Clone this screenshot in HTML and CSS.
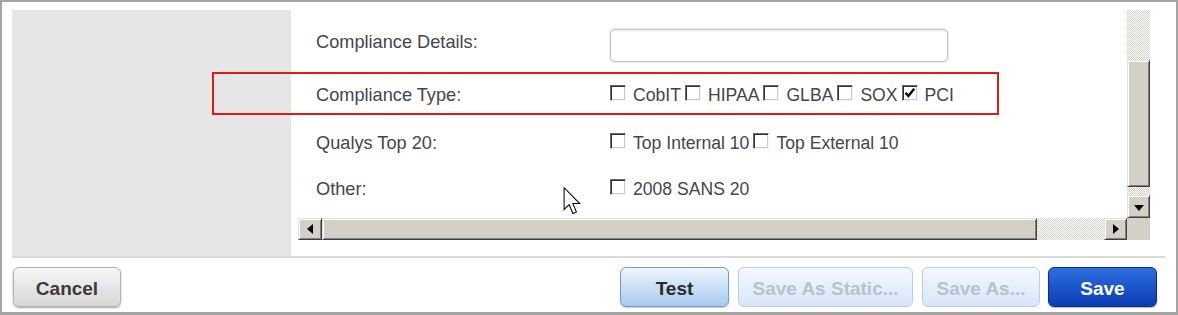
FILE: index.html
```html
<!DOCTYPE html>
<html>
<head>
<meta charset="utf-8">
<link rel="stylesheet" href="styles.css">
</head>
<body>
<div class="frame">
  <div class="top">
    <div class="side"></div>
    <div class="scroller">
      <div class="content">
        <div class="row row-details">
          <div class="label label-top">Compliance Details:</div>
          <div class="value"><div class="input"></div></div>
        </div>
        <div class="row row-type">
          <div class="label">Compliance Type:</div>
          <div class="value">
            <span class="opt"><span class="cb"></span>CobIT</span>
            <span class="opt"><span class="cb"></span>HIPAA</span>
            <span class="opt"><span class="cb"></span>GLBA</span>
            <span class="opt"><span class="cb"></span>SOX</span>
            <span class="opt"><span class="cb checked"><svg width="14" height="14" viewBox="0 0 14 14"><path d="M2.5 6.8 L5.4 10 L11.2 2.8" fill="none" stroke="#000" stroke-width="2.4"/></svg></span>PCI</span>
          </div>
        </div>
        <div class="row row-top20">
          <div class="label">Qualys Top 20:</div>
          <div class="value">
            <span class="opt"><span class="cb"></span>Top Internal 10</span>
            <span class="opt"><span class="cb"></span>Top External 10</span>
          </div>
        </div>
        <div class="row row-other">
          <div class="label">Other:</div>
          <div class="value">
            <span class="opt"><span class="cb"></span>2008 SANS 20</span>
          </div>
        </div>
      </div>
      <div class="vbar">
        <div class="track track-top"></div>
        <div class="thumb thumb-v"></div>
        <div class="track track-mid"></div>
        <div class="arrow-btn"><span class="tri tri-down"></span></div>
      </div>
      <div class="hbar">
        <div class="arrow-btn arrow-left"><span class="tri tri-left"></span></div>
        <div class="thumb thumb-h"></div>
        <div class="track track-h"></div>
        <div class="arrow-btn arrow-right"><span class="tri tri-right"></span></div>
      </div>
      <div class="corner"></div>
    </div>
  </div>
  <div class="bottom">
    <button class="btn btn-cancel">Cancel</button>
    <div class="actions">
      <button class="btn btn-test">Test</button>
      <button class="btn btn-disabled btn-static">Save As Static...</button>
      <button class="btn btn-disabled btn-saveas">Save As...</button>
      <button class="btn btn-save">Save</button>
    </div>
  </div>
  <div class="highlight"></div>
  <svg class="cursor" width="19" height="28" viewBox="0 0 12.6 19.3"><path d="M0.5 0.5 L0.5 15.5 L4 12.2 L6.6 18.3 L9 17.3 L6.5 11.4 L11.3 11.4 Z" fill="#fff" stroke="#000" stroke-width="0.7" stroke-linejoin="miter"/></svg>
</div>
</body>
</html>
```

FILE: styles.css
```css
* { box-sizing: border-box; }
html, body { margin: 0; padding: 0; background: #fff; }
body { font-family: "Liberation Sans", Arial, sans-serif; }

.frame {
  position: relative;
  width: 1178px;
  height: 315px;
  border: 2px solid #a3a3a3;
  border-bottom-width: 3px;
  padding: 8px 11px 0 10px;
  background: #fff;
}

.top {
  display: flex;
  height: 248px;
  border-bottom: 2px solid #dadada;
}

.side {
  width: 279px;
  height: 246px;
  background: #e6e6e6;
}

.scroller {
  margin-left: 7px;
  width: 852px;
  height: 230px;
  display: grid;
  grid-template-columns: 829px 23px;
  grid-template-rows: 208px 22px;
}

.content {
  overflow: hidden;
  padding: 19px 0 0 18px;
  color: #44464c;
  font-size: 17.6px;
}

.row { display: flex; align-items: center; height: 40px; }
.row-details { height: 33px; align-items: flex-start; }
.row-type { margin-top: 13px; }
.row-top20 { margin-top: 8px; }
.row-other { margin-top: 6px; }

.label { width: 294px; line-height: 20px; font-size: 18.2px; }
.label-top { padding-top: 3px; }
.value { display: flex; align-items: center; line-height: 20px; }

.input {
  width: 338px;
  height: 33px;
  border: 1px solid #c2c2c2;
  border-radius: 5px;
  box-shadow: 0 0 0 1px #ececec, inset 0 1px 2px rgba(0,0,0,0.08);
  background: #fff;
}

.opt { display: inline-flex; align-items: center; margin-right: 4px; white-space: nowrap; }
.cb {
  display: inline-block;
  width: 16px;
  height: 16px;
  margin-right: 7px;
  margin-bottom: 4px;
  border-style: solid;
  border-width: 1px;
  border-color: #6a6a6a #f4f4f4 #f4f4f4 #6a6a6a;
  box-shadow: inset 1px 1px 0 #303030, inset -1px -1px 0 #cfcbc3;
  background: #fff;
}
.cb svg { display: block; }

/* scrollbars */
.vbar {
  display: flex;
  flex-direction: column;
}
.track {
  background-color: #fff;
  background-image: repeating-conic-gradient(#d4d0c8 0 25%, #ffffff 0 50%);
  background-size: 2px 2px;
}
.track-top { height: 50px; }
.track-mid { height: 8px; }
.thumb {
  background: #d4d0c8;
  border: 1px solid;
  border-color: #e4e2dc #404040 #404040 #e4e2dc;
  box-shadow: inset 1px 1px 0 #fff, inset -1px -1px 0 #808080;
}
.thumb-v { height: 127px; }
.arrow-btn {
  height: 23px;
  display: flex;
  align-items: center;
  justify-content: center;
  background: #d4d0c8;
  border: 1px solid;
  border-color: #e4e2dc #404040 #404040 #e4e2dc;
  box-shadow: inset 1px 1px 0 #fff, inset -1px -1px 0 #808080;
}
.hbar { display: flex; grid-column: 1; grid-row: 2; }
.hbar .arrow-btn { height: 22px; }
.arrow-left { width: 24px; }
.arrow-right { width: 23px; }
.thumb-h { width: 715px; }
.track-h { flex: 1; }
.corner { background: #d4d0c8; grid-column: 2; grid-row: 2; }

.tri { width: 0; height: 0; border-style: solid; }
.tri-down { border-width: 6px 5px 0 5px; border-color: #000 transparent transparent transparent; margin-top: 2px; }
.tri-left { border-width: 5px 6px 5px 0; border-color: transparent #000 transparent transparent; }
.tri-right { border-width: 5px 0 5px 6px; border-color: transparent transparent transparent #000; }

/* bottom buttons */
.bottom {
  display: flex;
  justify-content: space-between;
  padding-top: 9px;
}
.actions { display: flex; margin-right: 8px; }
.btn {
  height: 40px;
  border-radius: 6px;
  font-family: "Liberation Sans", Arial, sans-serif;
  font-weight: bold;
  font-size: 19px;
  padding: 3px 0 0 0;
  cursor: default;
}
.btn-cancel {
  margin-left: 1px;
  width: 108px;
  color: #3a3a3a;
  border: 1px solid #b3b3b3;
  background: linear-gradient(#f7f7f7, #d6d6d6);
  box-shadow: 0 1px 2px rgba(0,0,0,0.35);
}
.btn-test {
  width: 109px;
  color: #2a2a2a;
  border: 1px solid #6d9ad3;
  background: linear-gradient(#eef5fd, #a9c9f0);
  box-shadow: 0 1px 1px rgba(0,0,0,0.2);
}
.btn-disabled {
  color: #b8c2cd;
  border: 1px solid #b9d0ec;
  background: linear-gradient(#f4f8fd, #d7e6f8);
}
.btn-static { width: 175px; margin-left: 9px; }
.btn-saveas { width: 118px; margin-left: 9px; }
.btn-save {
  width: 109px;
  margin-left: 8px;
  color: #fff;
  border: 1px solid #0b2f8c;
  background: linear-gradient(#2f6fe0, #0a3cb3);
  box-shadow: 0 1px 1px rgba(0,0,0,0.3);
}

.highlight {
  position: absolute;
  left: 210px;
  top: 70px;
  width: 787px;
  height: 43px;
  border: 2px solid #de1d12;
  pointer-events: none;
}
.cursor {
  position: absolute;
  left: 561px;
  top: 185px;
}
```
